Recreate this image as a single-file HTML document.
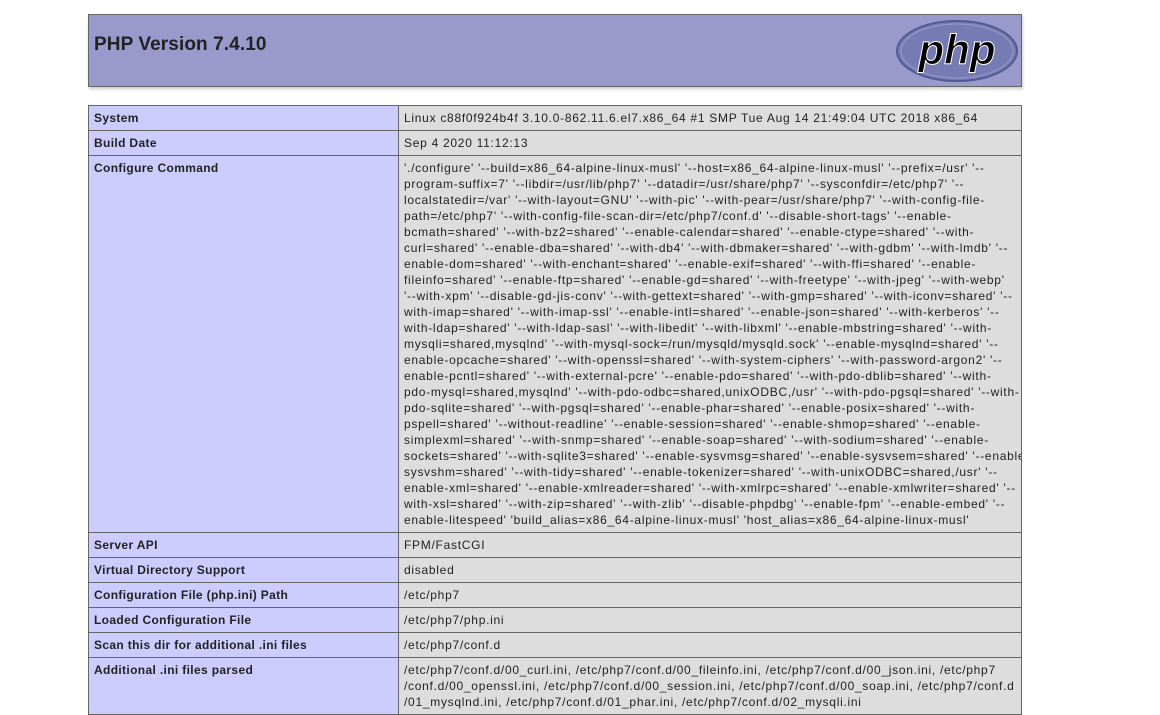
<!DOCTYPE html>
<html><head><meta charset="utf-8"><style>
body{margin:0;background:#fff;font-family:"Liberation Sans",Arial,sans-serif;font-size:12px;color:#222;}
.h{position:absolute;left:88px;top:14px;width:932px;height:71px;background:#99c;border:1px solid #666;box-shadow:1px 2px 3px #ccc;}
.h h1{position:absolute;left:5px;top:19px;margin:0;font-size:19px;font-weight:bold;letter-spacing:0.1px;}
.r{position:absolute;left:88px;width:934px;}
.e,.v{position:absolute;top:0;bottom:0;border:1px solid #666;box-sizing:border-box;padding:4px 5px;line-height:16px;}
.e{left:0;width:311px;background:#ccf;font-weight:bold;letter-spacing:0.35px;}
.v{left:310px;right:0;background:#ddd;white-space:nowrap;letter-spacing:0.72px;overflow:hidden;}
</style></head><body>
<div class="h"><h1>PHP Version 7.4.10</h1>
<svg style="position:absolute;left:806px;top:4px" width="124" height="64" viewBox="0 0 124 64">
<ellipse cx="62" cy="32" rx="60" ry="30" fill="#777bb3" stroke="#4f5b93" stroke-width="2"/>
<ellipse cx="62" cy="32" rx="56" ry="27" fill="none" stroke="#fff" stroke-opacity=".25"/>
<text x="62" y="45" text-anchor="middle" font-family="Liberation Sans,sans-serif" font-size="42" font-weight="bold" font-style="italic" fill="#000" stroke="#fff" stroke-width="1">php</text>
</svg></div>

<div class="r" style="top:105px;height:26px"><div class="e">System</div><div class="v">Linux c88f0f924b4f 3.10.0-862.11.6.el7.x86_64 #1 SMP Tue Aug 14 21:49:04 UTC 2018 x86_64</div></div>
<div class="r" style="top:130px;height:26px"><div class="e">Build Date</div><div class="v">Sep 4 2020 11:12:13</div></div>
<div class="r" style="top:155px;height:378px"><div class="e">Configure Command</div><div class="v">'./configure' '--build=x86_64-alpine-linux-musl' '--host=x86_64-alpine-linux-musl' '--prefix=/usr' '--<br>program-suffix=7' '--libdir=/usr/lib/php7' '--datadir=/usr/share/php7' '--sysconfdir=/etc/php7' '--<br>localstatedir=/var' '--with-layout=GNU' '--with-pic' '--with-pear=/usr/share/php7' '--with-config-file-<br>path=/etc/php7' '--with-config-file-scan-dir=/etc/php7/conf.d' '--disable-short-tags' '--enable-<br>bcmath=shared' '--with-bz2=shared' '--enable-calendar=shared' '--enable-ctype=shared' '--with-<br>curl=shared' '--enable-dba=shared' '--with-db4' '--with-dbmaker=shared' '--with-gdbm' '--with-lmdb' '--<br>enable-dom=shared' '--with-enchant=shared' '--enable-exif=shared' '--with-ffi=shared' '--enable-<br>fileinfo=shared' '--enable-ftp=shared' '--enable-gd=shared' '--with-freetype' '--with-jpeg' '--with-webp'<br>'--with-xpm' '--disable-gd-jis-conv' '--with-gettext=shared' '--with-gmp=shared' '--with-iconv=shared' '--<br>with-imap=shared' '--with-imap-ssl' '--enable-intl=shared' '--enable-json=shared' '--with-kerberos' '--<br>with-ldap=shared' '--with-ldap-sasl' '--with-libedit' '--with-libxml' '--enable-mbstring=shared' '--with-<br>mysqli=shared,mysqlnd' '--with-mysql-sock=/run/mysqld/mysqld.sock' '--enable-mysqlnd=shared' '--<br>enable-opcache=shared' '--with-openssl=shared' '--with-system-ciphers' '--with-password-argon2' '--<br>enable-pcntl=shared' '--with-external-pcre' '--enable-pdo=shared' '--with-pdo-dblib=shared' '--with-<br>pdo-mysql=shared,mysqlnd' '--with-pdo-odbc=shared,unixODBC,/usr' '--with-pdo-pgsql=shared' '--with-<br>pdo-sqlite=shared' '--with-pgsql=shared' '--enable-phar=shared' '--enable-posix=shared' '--with-<br>pspell=shared' '--without-readline' '--enable-session=shared' '--enable-shmop=shared' '--enable-<br>simplexml=shared' '--with-snmp=shared' '--enable-soap=shared' '--with-sodium=shared' '--enable-<br>sockets=shared' '--with-sqlite3=shared' '--enable-sysvmsg=shared' '--enable-sysvsem=shared' '--enable-<br>sysvshm=shared' '--with-tidy=shared' '--enable-tokenizer=shared' '--with-unixODBC=shared,/usr' '--<br>enable-xml=shared' '--enable-xmlreader=shared' '--with-xmlrpc=shared' '--enable-xmlwriter=shared' '--<br>with-xsl=shared' '--with-zip=shared' '--with-zlib' '--disable-phpdbg' '--enable-fpm' '--enable-embed' '--<br>enable-litespeed' 'build_alias=x86_64-alpine-linux-musl' 'host_alias=x86_64-alpine-linux-musl'</div></div>
<div class="r" style="top:532px;height:26px"><div class="e">Server API</div><div class="v">FPM/FastCGI</div></div>
<div class="r" style="top:557px;height:26px"><div class="e">Virtual Directory Support</div><div class="v">disabled</div></div>
<div class="r" style="top:582px;height:26px"><div class="e">Configuration File (php.ini) Path</div><div class="v">/etc/php7</div></div>
<div class="r" style="top:607px;height:26px"><div class="e">Loaded Configuration File</div><div class="v">/etc/php7/php.ini</div></div>
<div class="r" style="top:632px;height:26px"><div class="e">Scan this dir for additional .ini files</div><div class="v">/etc/php7/conf.d</div></div>
<div class="r" style="top:657px;height:58px"><div class="e">Additional .ini files parsed</div><div class="v">/etc/php7/conf.d/00_curl.ini, /etc/php7/conf.d/00_fileinfo.ini, /etc/php7/conf.d/00_json.ini, /etc/php7<br>/conf.d/00_openssl.ini, /etc/php7/conf.d/00_session.ini, /etc/php7/conf.d/00_soap.ini, /etc/php7/conf.d<br>/01_mysqlnd.ini, /etc/php7/conf.d/01_phar.ini, /etc/php7/conf.d/02_mysqli.ini</div></div>
</body></html>
